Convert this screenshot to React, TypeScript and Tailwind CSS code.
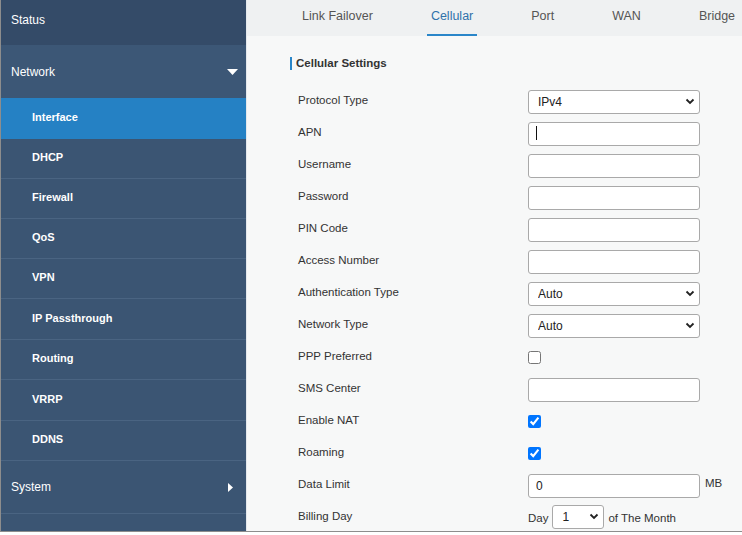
import React from 'react'

const subItems = [
  { label: 'Interface', h: 'h-[41px]', active: true },
  { label: 'DHCP', h: 'h-[40px]' },
  { label: 'Firewall', h: 'h-[40px]' },
  { label: 'QoS', h: 'h-[40px]' },
  { label: 'VPN', h: 'h-[40px]' },
  { label: 'IP Passthrough', h: 'h-[41px]' },
  { label: 'Routing', h: 'h-[40px]' },
  { label: 'VRRP', h: 'h-[41px]' },
  { label: 'DDNS', h: 'h-[40px]' },
]

const tabs = ['Link Failover', 'Cellular', 'Port', 'WAN', 'Bridge']

function Chevron() {
  return (
    <svg width="10" height="7" viewBox="0 0 10 7" className="pointer-events-none">
      <path d="M1.5 1.5 L5 5 L8.5 1.5" fill="none" stroke="#222" strokeWidth="1.8" />
    </svg>
  )
}

function Select({ value, w = 'w-[172px]' }: { value: string; w?: string }) {
  return (
    <div className={`relative ${w} h-[24px]`}>
      <select
        defaultValue={value}
        className="appearance-none w-full h-full bg-white border border-[#a9a9a9] rounded-[3px] pl-[9px] text-[12px] text-[#222] outline-none"
      >
        <option>{value}</option>
      </select>
      <div className="absolute right-[5px] top-[9px] flex">
        <Chevron />
      </div>
    </div>
  )
}

function TextInput({ value = '', caret = false }: { value?: string; caret?: boolean }) {
  return (
    <div className="relative w-[172px] h-[24px]">
      <input
        readOnly
        value={value}
        className="w-full h-full bg-white border border-[#a9a9a9] rounded-[3px] px-[7px] text-[12px] text-[#222] outline-none"
      />
      {caret && <span className="absolute left-[8px] top-[5px] w-px h-[14px] bg-[#111]" />}
    </div>
  )
}

function Check({ checked }: { checked?: boolean }) {
  return (
    <div className="h-[24px] flex items-center">
      <input
        type="checkbox"
        readOnly
        checked={!!checked}
        className="m-0 w-[13px] h-[13px] accent-[#0075ff]"
      />
    </div>
  )
}

function Row({ label, children }: { label: string; children: React.ReactNode }) {
  return (
    <div className="flex h-[32px]">
      <div className="w-[230px] leading-[23px] text-[11.5px] text-[#333]">{label}</div>
      <div className="flex items-start">{children}</div>
    </div>
  )
}

export default function App() {
  return (
    <div className="w-[742px] h-[535px] bg-white font-['Liberation_Sans',Arial,sans-serif]">
      <div className="flex h-[532px] border-l border-b border-[#8d8d8d] overflow-hidden">
        {/* Sidebar */}
        <aside className="w-[246px] shrink-0 bg-[#3b5573] border-r border-[#e4e8ec] text-white">
          <div className="h-[45px] bg-[#344b68] flex items-center pl-[10px] pb-[5px] text-[12px]">Status</div>
          <div className="h-[53px] flex items-center justify-between pl-[10px] pr-[8px] text-[12px] bg-[#3c5776]">
            <span>Network</span>
            <svg width="11" height="6" viewBox="0 0 11 6">
              <path d="M0 0 H11 L5.5 6 Z" fill="#fff" />
            </svg>
          </div>
          {subItems.map((it) => (
            <div
              key={it.label}
              className={`${it.h} flex items-center pl-[31px] pb-[2px] text-[11px] font-bold border-b ${
                it.active ? 'bg-[#2581c4] border-[#2581c4]' : 'border-[#4a6482]'
              }`}
            >
              {it.label}
            </div>
          ))}
          <div className="h-[53px] flex items-center justify-between pl-[10px] pr-[13px] text-[12px] border-b border-[#4a6482]">
            <span>System</span>
            <svg width="5" height="9" viewBox="0 0 5 9">
              <path d="M0 0 L5 4.5 L0 9 Z" fill="#fff" />
            </svg>
          </div>
        </aside>

        {/* Content */}
        <main className="flex-1 bg-[#f7f8f8]">
          <nav className="h-[36px] bg-[#eff1f2] flex pl-[51px] gap-[50px] shrink-0 whitespace-nowrap">
            {tabs.map((t) => (
              <div
                key={t}
                className={`px-[4px] pt-[7px] text-[12.5px] border-b-2 ${
                  t === 'Cellular' ? 'text-[#2f72aa] border-[#2a86c9]' : 'text-[#555] border-transparent'
                }`}
              >
                {t}
              </div>
            ))}
          </nav>

          <section className="pl-[43px] pt-[21px]">
            <div className="flex items-center h-[13px] gap-[4px]">
              <span className="w-[2px] h-[13px] bg-[#2a86c9]" />
              <span className="text-[11.5px] font-bold text-[#333]">Cellular Settings</span>
            </div>

            <div className="pl-[8px] pt-[19px]">
              <Row label="Protocol Type"><Select value="IPv4" /></Row>
              <Row label="APN"><TextInput caret /></Row>
              <Row label="Username"><TextInput /></Row>
              <Row label="Password"><TextInput /></Row>
              <Row label="PIN Code"><TextInput /></Row>
              <Row label="Access Number"><TextInput /></Row>
              <Row label="Authentication Type"><Select value="Auto" /></Row>
              <Row label="Network Type"><Select value="Auto" /></Row>
              <Row label="PPP Preferred"><Check /></Row>
              <Row label="SMS Center"><TextInput /></Row>
              <Row label="Enable NAT"><Check checked /></Row>
              <Row label="Roaming"><Check checked /></Row>
              <Row label="Data Limit">
                <div className="flex items-center gap-[5px]">
                  <TextInput value="0" />
                  <span className="text-[11.5px] text-[#333] -mt-[3px]">MB</span>
                </div>
              </Row>
              <Row label="Billing Day">
                <div className="flex items-center gap-[4px] -mt-[1px]">
                  <span className="text-[11.5px] text-[#333] mt-[6px]">Day</span>
                  <Select value="1" w="w-[52px]" />
                  <span className="text-[11.5px] text-[#333] mt-[6px]">of The Month</span>
                </div>
              </Row>
            </div>
          </section>
        </main>
      </div>
    </div>
  )
}
